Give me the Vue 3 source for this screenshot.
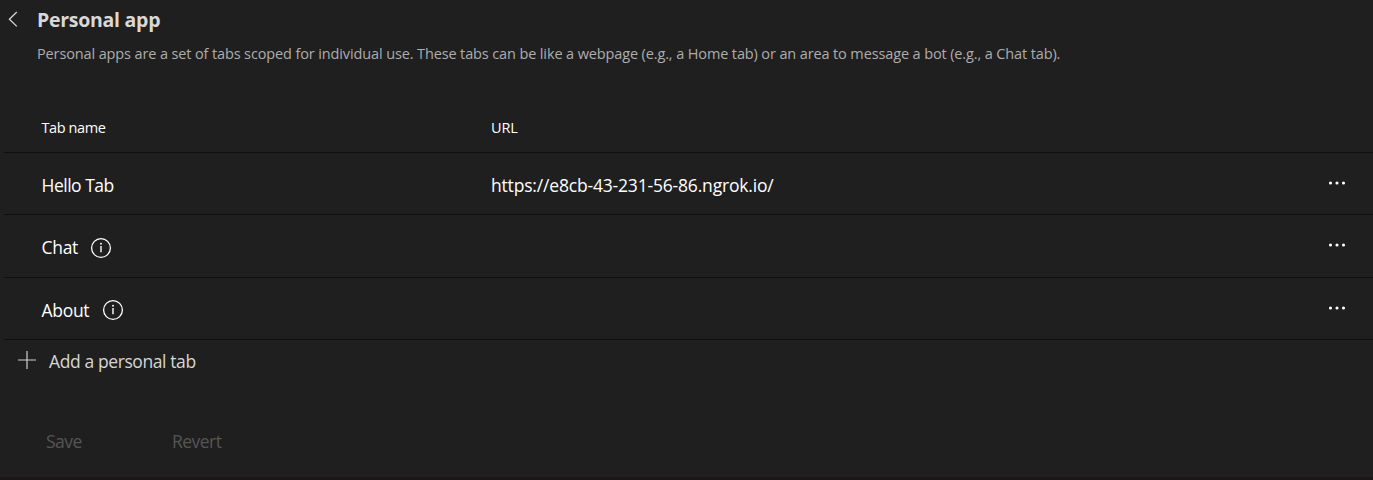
<script setup>
const rows = [
  { name: 'Hello Tab', url: 'https://e8cb-43-231-56-86.ngrok.io/', info: false, kind: 'hello' },
  { name: 'Chat', url: '', info: true, kind: 'chat' },
  { name: 'About', url: '', info: true, kind: 'about' },
]
</script>

<template>
  <main class="page">
    <header class="header">
      <svg class="back" width="12" height="18" viewBox="0 0 12 18">
        <path d="M9.8 1 2.4 8.2l7.4 7.2" />
      </svg>
      <h1>Personal app</h1>
    </header>
    <p class="intro">Personal apps are a set of tabs scoped for individual use. These tabs can be like a webpage (e.g., a Home tab) or an area to message a bot (e.g., a Chat tab).</p>

    <section class="table">
      <div class="row head">
        <div class="name">Tab name</div>
        <div class="url">URL</div>
      </div>
      <div v-for="row in rows" :key="row.name" class="row" :class="row.kind">
        <div class="name">
          <span class="label">{{ row.name }}</span>
          <svg v-if="row.info" class="info" width="22" height="22" viewBox="0 0 22 22">
            <circle class="ring" cx="11" cy="11" r="9.4" />
            <path class="stem" d="M11 9v6.2" />
            <circle class="dot" cx="11" cy="6.8" r="0.95" />
          </svg>
        </div>
        <div class="url">{{ row.url }}</div>
        <svg class="more" width="18" height="4" viewBox="0 0 18 4">
          <circle cx="2.5" cy="2" r="1.55" />
          <circle cx="9" cy="2" r="1.55" />
          <circle cx="15.5" cy="2" r="1.55" />
        </svg>
      </div>
    </section>

    <div class="add">
      <svg width="18" height="18" viewBox="0 0 18 18">
        <path d="M9 0v18M0 9h18" />
      </svg>
      <span class="addtext">Add a personal tab</span>
    </div>

    <footer class="actions">
      <span class="save">Save</span>
      <span class="revert">Revert</span>
    </footer>
  </main>
</template>

<style>
body {
  background: #201f1f;
}
</style>

<style scoped>
.page {
  box-sizing: border-box;
  width: 1373px;
  height: 480px;
  overflow: hidden;
  background: #201f1f;
  border-bottom: 3px solid #1a1518;
  color: #fff;
  font-family: "Open Sans", "Noto Sans", sans-serif;
  font-size: 17.5px;
  white-space: nowrap;
}
.header {
  display: flex;
  align-items: center;
  height: 40px;
  padding-left: 7px;
}
.back {
  margin-right: 18px;
  fill: none;
  stroke: #d6d6d6;
  stroke-width: 1.3;
}
h1 {
  margin: 0;
  font-size: 19.5px;
  font-weight: 700;
  line-height: 40px;
  letter-spacing: -0.27px;
  color: #d8d8d8;
}
.intro {
  height: 28px;
  margin: 0 0 0 37px;
  font-size: 14.5px;
  line-height: 28px;
  letter-spacing: -0.125px;
  color: #adadad;
}
.table {
  margin: 35px 0 0 4px;
}
.row {
  box-sizing: border-box;
  display: flex;
  height: 62px;
  padding: 3px 27px 0 37.5px;
  border-bottom: 1px solid #0f0f0f;
  align-items: center;
}
.row.chat {
  height: 63px;
}
.row.head {
  height: 50px;
  padding-top: 0;
  font-size: 14.5px;
}
.name {
  display: flex;
  align-items: center;
  width: 449.5px;
  letter-spacing: -0.3px;
}
.head .name {
  letter-spacing: -0.4px;
}
.hello .name {
  letter-spacing: -0.5px;
}
.chat .label {
  margin-bottom: 2px;
}
.url {
  flex: 1;
  letter-spacing: -0.18px;
}
.info {
  margin-left: 12px;
}
.about .info {
  margin-left: 13px;
}
.ring {
  fill: none;
  stroke: #fff;
  stroke-width: 1.3;
}
.stem {
  stroke: #fff;
  stroke-width: 1.4;
}
.more {
  margin-bottom: 5px;
}
.dot,
.more {
  fill: #fff;
}
.add {
  display: flex;
  align-items: center;
  gap: 13px;
  height: 42px;
  padding-left: 18px;
  letter-spacing: -0.4px;
  color: #d6d6d6;
}
.add svg {
  margin-bottom: 2px;
  fill: none;
  stroke: #d0d0d0;
  stroke-width: 1.2;
}
.actions {
  display: flex;
  gap: 90px;
  margin-top: 47px;
  padding-left: 46px;
  line-height: 24px;
  letter-spacing: -0.5px;
  color: #555;
}
</style>
